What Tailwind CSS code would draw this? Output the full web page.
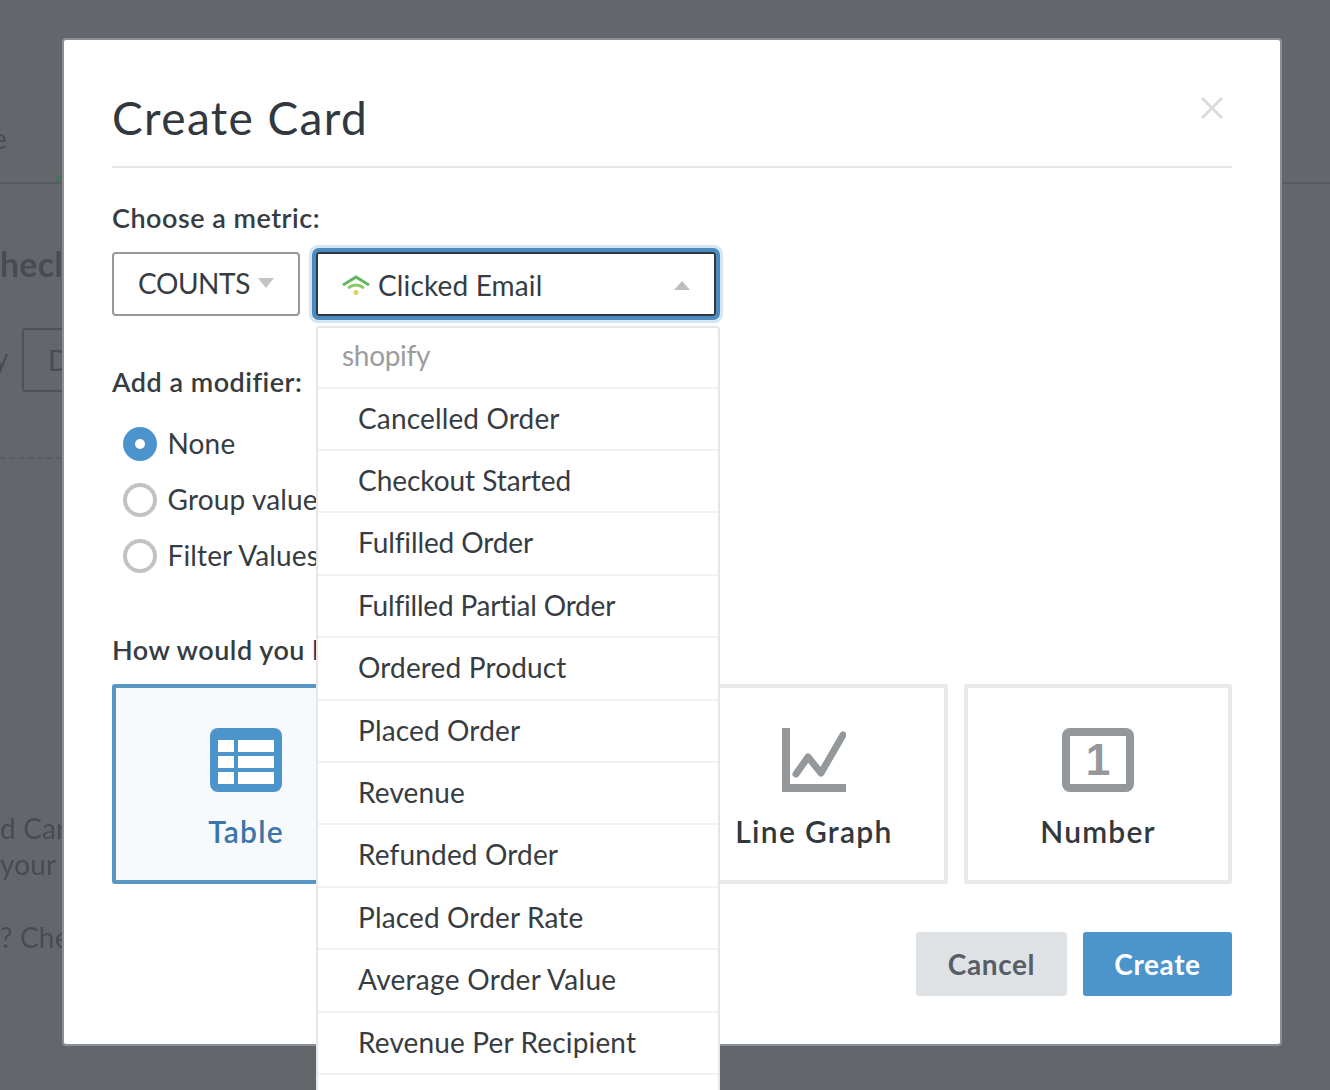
<!DOCTYPE html>
<html>
<head>
<meta charset="utf-8">
<script src="https://cdn.jsdelivr.net/npm/@tailwindcss/browser@4"></script>
</head>
<body class="m-0">
<div class="relative w-[1330px] h-[1090px] overflow-hidden bg-[#63676c] font-['Lato','Liberation_Sans',sans-serif] tracking-[0.15px] text-[#363c42]">
  <!-- dimmed page behind the dialog -->
  <div class="absolute inset-0 blur-[0.6px] text-[#474c52]">
    <div class="absolute left-0 right-0 top-[182px] h-[2px] bg-[#585c61]"></div>
    <div class="absolute left-[56px] top-[175px] w-[8px] h-[7px] bg-[#4d6f5f]"></div>
    <span class="absolute left-[-8px] top-[120px] text-[28px] leading-[36px]">e</span>
    <span class="absolute left-0 top-[244px] text-[34px] leading-[40px] font-bold">hecl</span>
    <div class="absolute left-[22px] top-[328px] w-[60px] h-[64px] border-2 border-[#4f5358] rounded-[3px] pl-[24px] pt-[12px] text-[28px] leading-[36px]">D</div>
    <span class="absolute left-[-6px] top-[340px] text-[28px] leading-[36px]">y</span>
    <div class="absolute left-0 w-[62px] top-[457px] border-t-2 border-dashed border-[#585c61]"></div>
    <span class="absolute left-0 top-[810px] text-[28px] leading-[36px] whitespace-nowrap">d Card</span>
    <span class="absolute left-0 top-[846px] text-[28px] leading-[36px] whitespace-nowrap">your</span>
    <span class="absolute left-0 top-[919px] text-[28px] leading-[36px] whitespace-nowrap">? Check</span>
  </div>

  <!-- dialog -->
  <div class="absolute left-[62px] top-[38px] w-[1220px] h-[1008px] bg-white border-2 border-[#8b8f93] rounded-[4px] px-[48px]">
    <div class="relative h-[128px] border-b-2 border-[#e5e7e8]">
      <h1 class="absolute left-0 top-[50px] m-0 text-[46px] leading-[56px] font-normal text-[#32383e] tracking-[1.4px]">Create Card</h1>
      <svg class="absolute right-[8px] top-[56px]" width="24" height="24" viewBox="0 0 24 24" fill="none" stroke="#dadbdc" stroke-width="3"><path d="M2 2 22 22M22 2 2 22"/></svg>
    </div>

    <div class="mt-[33px] h-[34px] leading-[34px] text-[27px] font-semibold tracking-[0.5px]">Choose a metric:</div>

    <div class="relative mt-[17px] flex gap-[16px] h-[64px]">
      <div class="w-[188px] h-[64px] border-2 border-[#97999b] rounded-[4px] flex items-center pl-[24px] pb-[2px] gap-[8px] text-[28px] tracking-[-0.4px]">
        <span>COUNTS</span>
        <svg width="16" height="10" viewBox="0 0 16 10"><path d="M0 0H16L8 10Z" fill="#c3c5c7"/></svg>
      </div>
      <div class="relative w-[400px] h-[64px] border-2 border-[#2f3640] rounded-[3px] ring-[4px] ring-[#4a8abf] shadow-[0_0_0_7px_#d5e5f1] flex items-center pl-[24px] pr-[24px] pt-[2px] text-[28px]">
        <svg class="mr-[8px]" width="28" height="20" viewBox="0 0 28 20" fill="none">
          <path d="M1 10 14 2 27 10" stroke="#5fb760" stroke-width="3"/>
          <path d="M6 13Q14 7 22 13" stroke="#8cc96b" stroke-width="3"/>
          <circle cx="14" cy="17.5" r="2.5" fill="#d9d65c"/>
        </svg>
        <span>Clicked Email</span>
        <svg class="ml-auto" width="16" height="9" viewBox="0 0 16 9"><path d="M0 9H16L8 0Z" fill="#bcbec0"/></svg>
      </div>

      <div class="absolute left-[204px] top-[74px] z-10 w-[404px] h-[800px] bg-white border-2 border-[#e4e6e7] rounded-t-[4px] text-[28px]">
        <div class="h-[60.6px] border-b-2 border-[#f0f1f2] pl-[24px] leading-[54px] tracking-[-0.3px] text-[#9a9da0]">shopify</div>
        <div class="h-[62.4px] border-b-2 border-[#f0f1f2] pl-[40px] leading-[59px]">Cancelled Order</div>
        <div class="h-[62.4px] border-b-2 border-[#f0f1f2] pl-[40px] leading-[59px] tracking-[-0.04px]">Checkout Started</div>
        <div class="h-[62.4px] border-b-2 border-[#f0f1f2] pl-[40px] leading-[59px] tracking-[-0.12px]">Fulfilled Order</div>
        <div class="h-[62.4px] border-b-2 border-[#f0f1f2] pl-[40px] leading-[59px] tracking-[-0.2px]">Fulfilled Partial Order</div>
        <div class="h-[62.4px] border-b-2 border-[#f0f1f2] pl-[40px] leading-[59px]">Ordered Product</div>
        <div class="h-[62.4px] border-b-2 border-[#f0f1f2] pl-[40px] leading-[59px]">Placed Order</div>
        <div class="h-[62.4px] border-b-2 border-[#f0f1f2] pl-[40px] leading-[59px]">Revenue</div>
        <div class="h-[62.4px] border-b-2 border-[#f0f1f2] pl-[40px] leading-[59px]">Refunded Order</div>
        <div class="h-[62.4px] border-b-2 border-[#f0f1f2] pl-[40px] leading-[59px]">Placed Order Rate</div>
        <div class="h-[62.4px] border-b-2 border-[#f0f1f2] pl-[40px] leading-[59px] tracking-[0.3px]">Average Order Value</div>
        <div class="h-[62.4px] border-b-2 border-[#f0f1f2] pl-[40px] leading-[59px]">Revenue Per Recipient</div>
      </div>
    </div>

    <div class="mt-[49px] h-[34px] leading-[34px] text-[27px] font-semibold tracking-[0.5px]">Add a modifier:</div>

    <div class="mt-[17px] pl-[11px] text-[28px]">
      <div class="h-[56px] flex items-center gap-[10.5px]">
        <span class="w-[34px] h-[34px] rounded-full bg-[#4b94cc] flex items-center justify-center"><span class="w-[10px] h-[10px] rounded-full bg-white"></span></span>
        <span class="pb-[2px]">None</span>
      </div>
      <div class="h-[56px] flex items-center gap-[10.5px]">
        <span class="w-[34px] h-[34px] rounded-full border-[4px] border-[#c0c2c4]"></span>
        <span class="pb-[2px]">Group values</span>
      </div>
      <div class="h-[56px] flex items-center gap-[10.5px]">
        <span class="w-[34px] h-[34px] rounded-full border-[4px] border-[#c0c2c4]"></span>
        <span class="pb-[2px]">Filter Values</span>
      </div>
    </div>

    <div class="mt-[49px] h-[34px] leading-[34px] text-[27px] font-semibold tracking-[0.5px]">How would you like to view it?</div>

    <div class="mt-[17px] grid grid-cols-4 gap-[16px] h-[200px]">
      <div class="border-[4px] border-[#5a96c3] rounded-[3px] bg-[#f6fafd] flex flex-col items-center pt-[40px]">
        <svg width="72" height="64" viewBox="0 0 72 64"><rect width="72" height="64" rx="8" fill="#4b94cc"/><g fill="#fff"><rect x="8" y="12" width="16" height="12"/><rect x="28" y="12" width="36" height="12"/><rect x="8" y="28" width="16" height="12"/><rect x="28" y="28" width="36" height="12"/><rect x="8" y="44" width="16" height="12"/><rect x="28" y="44" width="36" height="12"/></g></svg>
        <span class="mt-[19px] text-[30px] leading-[40px] font-semibold tracking-[1.2px] text-[#3a76a8]">Table</span>
      </div>
      <div class="border-[4px] border-[#e8e9ea] rounded-[3px]"></div>
      <div class="border-[4px] border-[#e8e9ea] rounded-[3px] flex flex-col items-center pt-[40px]">
        <svg width="64" height="64" viewBox="0 0 64 64" fill="none"><path d="M0 0H8V56H64V64H0Z" fill="#95989b"/><path d="M14 46 26 29 39 45 61 7" stroke="#95989b" stroke-width="7" stroke-linecap="round" stroke-linejoin="round"/></svg>
        <span class="mt-[19px] text-[30px] leading-[40px] font-semibold tracking-[1.3px] text-[#32383e] whitespace-nowrap">Line Graph</span>
      </div>
      <div class="border-[4px] border-[#e8e9ea] rounded-[3px] flex flex-col items-center pt-[40px]">
        <div class="w-[72px] h-[64px] border-[8px] border-[#95989b] rounded-[8px] flex items-center justify-center font-['Liberation_Sans'] text-[44px] leading-none font-bold text-[#95989b]">1</div>
        <span class="mt-[19px] text-[30px] leading-[40px] font-semibold tracking-[1.2px] text-[#32383e]">Number</span>
      </div>
    </div>

    <div class="mt-[48px] flex justify-end gap-[16px] text-[28px] font-bold tracking-[0.6px]">
      <div class="w-[151px] h-[64px] pb-[1px] rounded-[3px] bg-[#dfe2e5] text-[#585e66] flex items-center justify-center">Cancel</div>
      <div class="w-[149px] h-[64px] pb-[1px] rounded-[3px] bg-[#4b94cc] text-white flex items-center justify-center">Create</div>
    </div>
  </div>
</div>
</body>
</html>
